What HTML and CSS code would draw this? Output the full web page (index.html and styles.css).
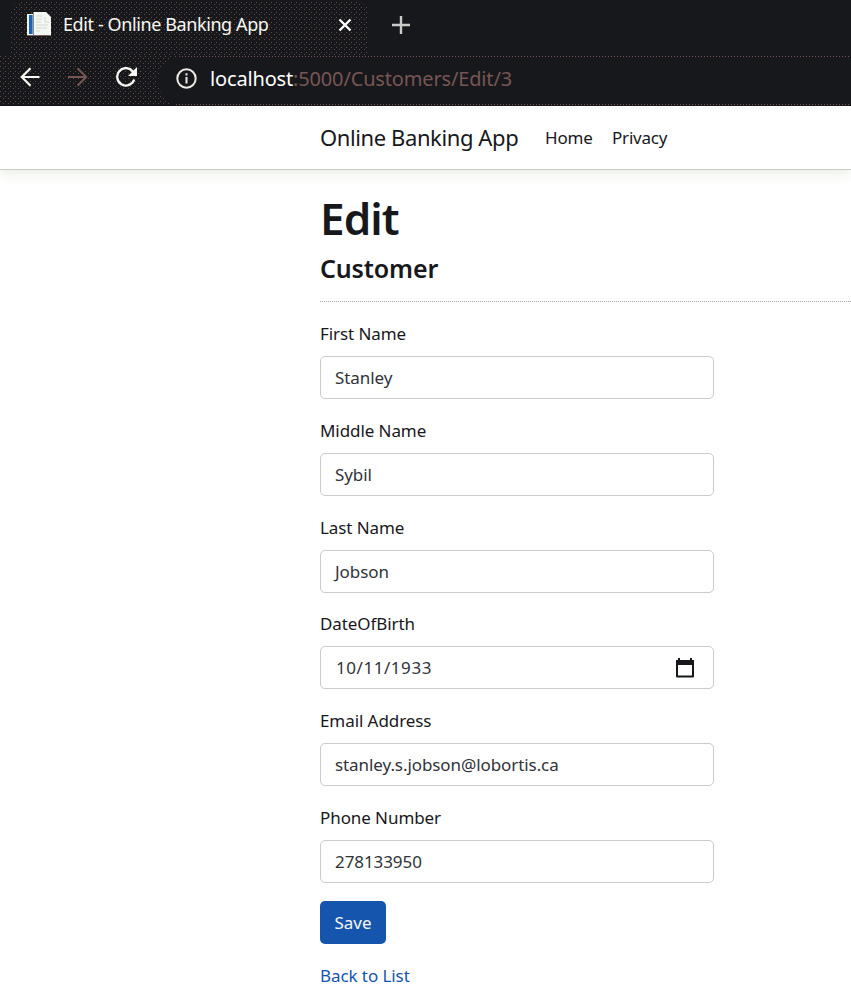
FILE: index.html
```html
<!DOCTYPE html>
<html lang="en">
<head>
<meta charset="utf-8">
<title>Edit - Online Banking App</title>
<link rel="stylesheet" href="styles.css">
</head>
<body>
<header class="browser">
  <div class="tabs">
    <div class="tab">
      <svg class="favicon" width="24" height="25" viewBox="0 0 24 25">
        <path d="M0 2h6v21H0z" fill="#eef3f1"/>
        <path d="M2 3h3.600v19H2z" fill="#1a63b8"/>
        <path d="M6.500 0H19l5 5v18.500H6.500z" fill="#f5f8f2"/>
        <path d="M9 4h6M9 7h6M9 10h5M9 13h12M9 16h11M9 19h4M18 5v5h4" fill="none" stroke="#d3d7d3" stroke-width="1"/>
        <path d="M0 23.500h23" stroke="#76605e"/>
      </svg>
      <span class="tab-title">Edit - Online Banking App</span>
      <svg class="close" width="14" height="14" viewBox="0 0 14 14"><path d="M1.500 1.500l11 11M12.500 1.500l-11 11" stroke="#fff" stroke-width="2.400"/></svg>
    </div>
    <svg class="plus" width="18" height="18" viewBox="0 0 18 18"><path d="M9 0v18M0 9h18" stroke="#cbcbc9" stroke-width="2.400"/></svg>
  </div>
  <div class="toolbar">
    <svg class="nav-icon back" width="20" height="20" viewBox="0 0 20 20"><path d="M19.500 10H2M10.500 1.300L1.800 10l8.700 8.700" fill="none" stroke="#f7f8f3" stroke-width="2.200"/></svg>
    <svg class="nav-icon forward" width="20" height="20" viewBox="0 0 20 20"><path d="M0 10h18M9.500 1.300l8.700 8.700-8.700 8.700" fill="none" stroke="#765654" stroke-width="2"/></svg>
    <svg class="nav-icon reload" width="22" height="20" viewBox="0 0 22 20"><path d="M18.200 12.500A8.700 8.700 0 1 1 16.600 4.200L18 5.800" fill="none" stroke="#f7f8f3" stroke-width="2.300"/><path d="M21 0v9h-9z" fill="#f7f8f3"/></svg>
    <div class="address">
      <svg width="21" height="21" viewBox="0 0 21 21"><circle cx="10.500" cy="10.500" r="9.200" fill="none" stroke="#eeeae5" stroke-width="2"/><path d="M10.500 9v6.500M10.500 5.300v2.200" stroke="#eeeae5" stroke-width="2"/></svg>
      <span class="url"><span class="host">localhost</span><span class="path">:5000/Customers/Edit/3</span></span>
    </div>
  </div>
</header>
<nav class="navbar">
  <a class="brand">Online Banking App</a>
  <a class="nav-link home">Home</a>
  <a class="nav-link privacy">Privacy</a>
</nav>
<main class="content">
  <h1>Edit</h1>
  <h4>Customer</h4>
  <hr>
  <form>
    <div class="group"><label>First Name</label><div class="control"><span>Stanley</span></div></div>
    <div class="group"><label>Middle Name</label><div class="control"><span>Sybil</span></div></div>
    <div class="group"><label>Last Name</label><div class="control"><span>Jobson</span></div></div>
    <div class="group"><label>DateOfBirth</label><div class="control date"><span>10/11/1933</span>
      <svg width="20" height="22" viewBox="0 0 20 22"><path d="M4 1v4M16 1v4" stroke="#17181b" stroke-width="2"/><path d="M2 4h16v15.500H2z" fill="none" stroke="#17181b" stroke-width="2" stroke-linejoin="round"/><path d="M1 3h18v5H1z" fill="#17181b"/></svg></div></div>
    <div class="group"><label>Email Address</label><div class="control"><span>stanley.s.jobson@lobortis.ca</span></div></div>
    <div class="group"><label>Phone Number</label><div class="control"><span>278133950</span></div></div>
    <button type="button" class="save">Save</button>
  </form>
  <a class="back-link">Back to List</a>
</main>
</body>
</html>
```
FILE: styles.css
```css
* { box-sizing: border-box; }
body {
  margin: 0;
  height: 989px;
  overflow: hidden;
  background: #fff;
  color: #17181b;
  font-family: "Noto Sans", "Open Sans", sans-serif;
  font-size: 17px;
  letter-spacing: -0.08px;
}
svg { display: block; flex: none; }

.browser {
  position: relative;
  z-index: 1;
  height: 106px;
  background: #17181b;
}
.tabs {
  display: flex;
  height: 56px;
  padding-left: 11px;
}
.tab,
.toolbar {
  background-color: #17181b;
  background-image:
    radial-gradient(circle at 0.5px 0.5px, #644846 0.5px, transparent 0.6px),
    radial-gradient(circle at 3.5px 2.5px, #644846 0.5px, transparent 0.6px);
  background-size: 5px 5px;
}
.tab {
  display: flex;
  width: 357px;
  margin-top: 2px;
  padding: 10px 0 0 16px;
  border-radius: 10px 10px 0 0;
}
.tab-title {
  width: 275px;
  margin-left: 12px;
  color: #f7f8f3;
  font-size: 18px;
  line-height: 25px;
  letter-spacing: -0.4px;
  white-space: nowrap;
}
.close { margin-top: 6px; }
.plus { margin: 16px 0 0 24px; }
.toolbar {
  display: flex;
  height: 50px;
  padding-left: 20px;
}
.nav-icon { margin-top: 11px; }
.forward { margin-left: 28px; }
.reload { margin-left: 28px; }
.address {
  display: flex;
  flex: 1;
  height: 50px;
  margin-left: 20px;
  padding: 12px 0 0 18px;
  border-radius: 25px 0 0 25px;
  background-color: #17181b;
  background-image:
    repeating-linear-gradient(90deg, #765654 0 1px, transparent 1px 3px),
    repeating-linear-gradient(90deg, #765654 0 1px, transparent 1px 3px);
  background-size: 100% 1px;
  background-position: 0 0, 0 48px;
  background-repeat: no-repeat;
}
.url {
  margin: -3px 0 0 13px;
  font-size: 20px;
  line-height: 27px;
  letter-spacing: -0.16px;
  white-space: nowrap;
}
.host { color: #fff; }
.path { color: #765654; }

.navbar {
  display: flex;
  align-items: center;
  height: 64px;
  padding-left: 320px;
  border-bottom: 1px solid #cbcbc9;
  box-shadow: 0 4px 12px #e9efe4;
  white-space: nowrap;
}
.brand {
  width: 225px;
  font-size: 22px;
  line-height: 30px;
  letter-spacing: -0.4px;
  padding-bottom: 1px;
}
.home { width: 67px; }
.nav-link { letter-spacing: -0.2px; }

.content { padding-left: 320px; }
h1, h4 { margin: 0; font-weight: 600; }
h1 {
  height: 54px;
  margin-top: 21px;
  font-size: 44px;
  line-height: 54px;
  letter-spacing: -0.9px;
}
h4 {
  height: 33px;
  margin-top: 7px;
  font-size: 25px;
  line-height: 33px;
  letter-spacing: -0.15px;
}
hr {
  height: 0;
  margin: 16px 0 18px;
  border: 0;
  border-top: 1px dotted #a5a5a3;
}
.group { height: 96.8px; }
label {
  display: block;
  height: 36px;
  line-height: 27px;
}
.control {
  display: flex;
  align-items: center;
  width: 394px;
  height: 43px;
  padding: 0 18px 0 14px;
  border: 1px solid #cbcbc9;
  border-radius: 5px;
  color: #303338;
}
.date {
  justify-content: space-between;
  padding: 0 18px 0 15px;
  letter-spacing: 0.55px;
}
.save {
  display: block;
  width: 66px;
  height: 43px;
  padding: 0;
  border: 0;
  border-radius: 5px;
  background: #1655ad;
  color: #f7f8f3;
  font: inherit;
  letter-spacing: inherit;
}
.back-link {
  display: block;
  margin-top: 18px;
  line-height: 27px;
  color: #1655ad;
}
```
